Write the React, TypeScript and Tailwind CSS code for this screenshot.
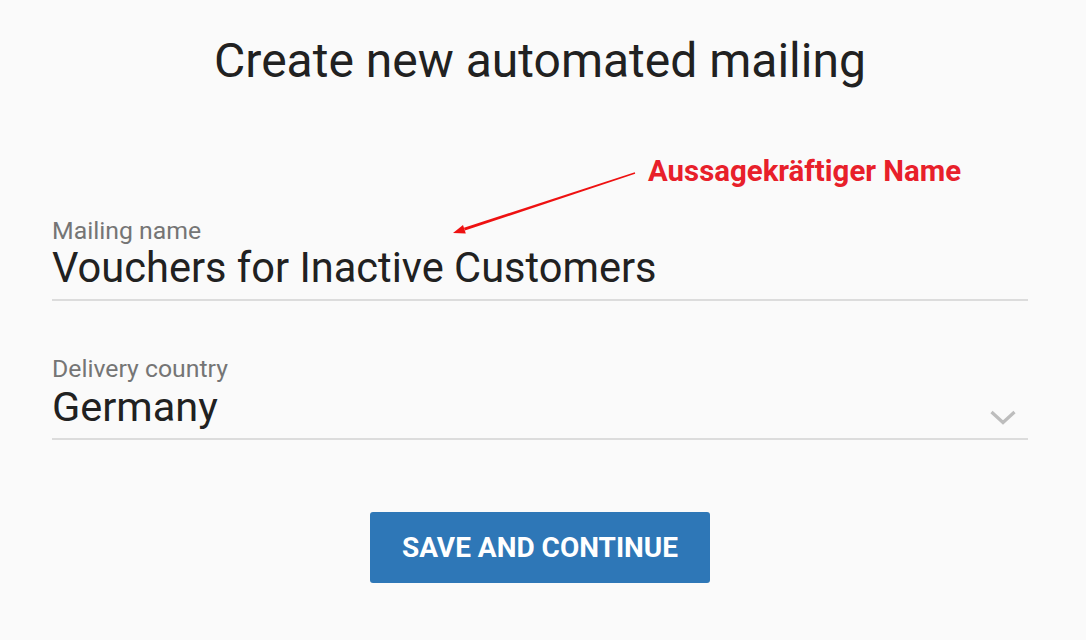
import React from "react";

export default function App() {
  return (
    <div
      className="relative w-[1086px] h-[640px] bg-[#fafafa] overflow-hidden"
      style={{ fontFamily: "Roboto, 'Liberation Sans', sans-serif" }}
    >
      <div className="flex flex-col pl-[52px] pr-[58px]">
        <h1 className="mt-[33px] text-center text-[48px] leading-[56px] text-[#212121] font-normal">
          Create new automated mailing
        </h1>

        <div className="mt-[128px] flex flex-col border-b-2 border-[#dcdcdc]">
          <label className="text-[24.8px] leading-[27px] text-[#757575]">Mailing name</label>
          <div className="text-[41.6px] leading-[48px] text-[#212121] pb-[7px]">
            Vouchers for Inactive Customers
          </div>
        </div>

        <div className="mt-[54px] flex items-end justify-between border-b-2 border-[#dcdcdc]">
          <div className="flex flex-col">
            <label className="text-[24.8px] leading-[27px] text-[#757575]">Delivery country</label>
            <div className="mt-[1px] text-[41.5px] leading-[48px] text-[#212121] pb-[7px]">Germany</div>
          </div>
          <svg width="26" height="16" viewBox="0 0 26 16" className="mb-[13px] mr-[12px]">
            <path d="M1.5 3 L13 13.5 L24.5 3" fill="none" stroke="#bdbdbd" strokeWidth="3.2" />
          </svg>
        </div>

        <div className="mt-[72px] flex justify-center">
          <button className="w-[340px] h-[71px] rounded-[3px] bg-[#2e77b7] text-white text-[28px] font-bold">
            SAVE AND CONTINUE
          </button>
        </div>
      </div>

      <div className="absolute left-[648px] top-[154px] text-[29.4px] leading-[34px] font-bold text-[#e8202a] whitespace-nowrap">
        Aussagekräftiger Name
      </div>
      <svg className="absolute left-0 top-0 pointer-events-none" width="1086" height="640">
        <polygon
          points="635.2,173.7 634.8,172.3 463.9,227.8 464.9,230.6"
          fill="#ee1111"
        />
        <polygon points="453,233 465.8,233.5 463,224.9" fill="#ee1111" />
      </svg>
    </div>
  );
}
